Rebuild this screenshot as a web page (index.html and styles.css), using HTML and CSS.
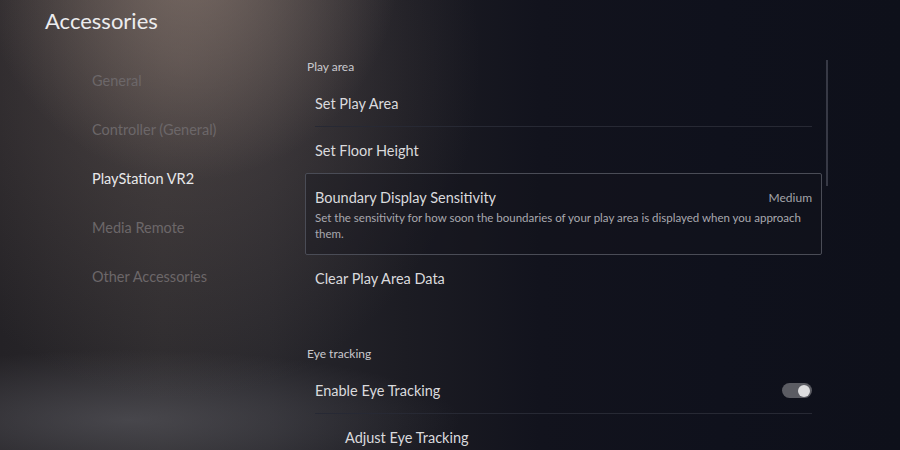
FILE: index.html
```html
<!DOCTYPE html>
<html lang="en">
<head>
<meta charset="utf-8">
<title>Accessories</title>
<link rel="stylesheet" href="styles.css">
</head>
<body>
<div class="page">
  <aside class="side">
    <h1 class="title">Accessories</h1>
    <nav class="nav">
      <div class="nav-item">General</div>
      <div class="nav-item">Controller (General)</div>
      <div class="nav-item active">PlayStation VR2</div>
      <div class="nav-item">Media Remote</div>
      <div class="nav-item">Other Accessories</div>
    </nav>
  </aside>
  <main class="content">
    <div class="section-head">Play area</div>
    <div class="row sep"><span class="label">Set Play Area</span></div>
    <div class="row"><span class="label">Set Floor Height</span></div>
    <div class="card">
      <div class="card-top">
        <span class="label">Boundary Display Sensitivity</span>
        <span class="value">Medium</span>
      </div>
      <p class="desc">Set the sensitivity for how soon the boundaries of your play area is displayed when you approach them.</p>
    </div>
    <div class="row"><span class="label">Clear Play Area Data</span></div>
    <div class="section-head eye">Eye tracking</div>
    <div class="row sep">
      <span class="label">Enable Eye Tracking</span>
      <span class="toggle"><span class="knob"></span></span>
    </div>
    <div class="row sub"><span class="label">Adjust Eye Tracking</span></div>
  </main>
  <div class="scrollbar"></div>
</div>
</body>
</html>
```
FILE: styles.css
```css
html, body {
  margin: 0;
  padding: 0;
}
body {
  width: 900px;
  height: 450px;
  overflow: hidden;
  font-family: "Lato", "Open Sans", sans-serif;
  color: #dcdcdf;
  background:
    radial-gradient(ellipse 210px 220px at 190px -40px, rgba(160, 140, 128, 0.55), rgba(160, 140, 128, 0) 100%),
    radial-gradient(ellipse 300px 340px at 180px 60px, rgba(110, 96, 92, 0.45), rgba(110, 96, 92, 0) 100%),
    radial-gradient(ellipse 330px 70px at 130px 420px, rgba(95, 95, 102, 0.55), rgba(95, 95, 102, 0) 100%),
    linear-gradient(90deg, #242226 0%, #2c2a2d 18%, #28272c 30%, #1c1c23 45%, #12131d 60%, #0f111c 80%, #0e101a 100%);
}
.page {
  display: flex;
  height: 450px;
}
.side {
  width: 305px;
  flex: none;
  padding-left: 45px;
  box-sizing: border-box;
}
.title {
  margin: 8px 0 0 0;
  font-size: 22px;
  font-weight: 400;
  line-height: 26px;
  color: #ececee;
}
.nav {
  padding-left: 47px;
  margin-top: 22px;
}
.nav-item {
  height: 49px;
  line-height: 49px;
  font-size: 14.5px;
  color: #6c6769;
  white-space: nowrap;
}
.nav-item.active {
  color: #e8e8ea;
}
.content {
  width: 517px;
  flex: none;
  padding-top: 58px;
}
.section-head {
  height: 23px;
  line-height: 18px;
  padding-left: 2px;
  font-size: 12px;
  color: #c9c9ce;
}
.section-head.eye {
  margin-top: 44px;
}
.row {
  height: 46px;
  display: flex;
  align-items: center;
  justify-content: space-between;
  margin: 0 10px;
  box-sizing: border-box;
}
.row.sep {
  border-bottom: 1px solid #272934;
}
.row.sub {
  padding-left: 30px;
}
.label {
  font-size: 14.5px;
  color: #dadadd;
}
.card {
  height: 82px;
  box-sizing: border-box;
  border: 1.5px solid #4a4c56;
  border-radius: 2px;
  padding: 12px 9px 0 9px;
  background: rgba(20, 21, 30, 0.35);
}
.card-top {
  display: flex;
  justify-content: space-between;
  align-items: center;
  height: 22px;
}
.value {
  font-size: 12px;
  color: #a4a4aa;
}
.desc {
  margin: 2px 0 0 0;
  font-size: 11.5px;
  line-height: 16px;
  color: #a9a9af;
}
.toggle {
  width: 30px;
  height: 15px;
  border-radius: 8px;
  background: #5b5c63;
  display: flex;
  align-items: center;
  justify-content: flex-end;
  padding: 0 2px;
  box-sizing: border-box;
}
.knob {
  width: 12px;
  height: 12px;
  border-radius: 50%;
  background: #dcdcde;
}
.scrollbar {
  width: 2px;
  height: 126px;
  margin-top: 60px;
  margin-left: 4px;
  background: #373945;
  flex: none;
}
```
